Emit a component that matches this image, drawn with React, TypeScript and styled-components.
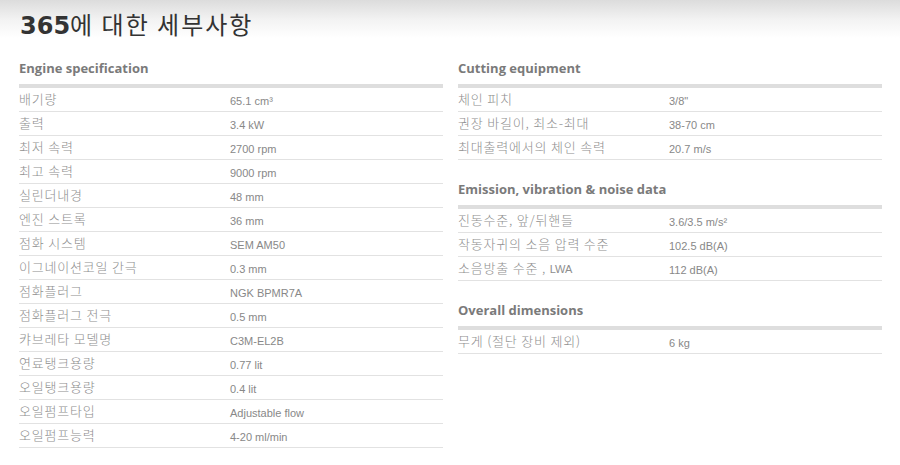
import React from "react";
import styled, { createGlobalStyle } from "styled-components";

const GlobalStyle = createGlobalStyle`
  html, body { margin: 0; padding: 0; background: #ffffff; }
  body { font-family: "Liberation Sans", "Noto Sans CJK KR", sans-serif; }
`;

const Page = styled.div`
  width: 900px;
  height: 465px;
  overflow: hidden;
  background: #ffffff;
`;

const Header = styled.header`
  height: 39px;
  padding-left: 20px;
  display: flex;
  align-items: flex-end;
  background: linear-gradient(to bottom, #dcdcdc 0px, #f3f3f3 20px, #ffffff 38px);
`;

const Title = styled.h1`
  margin: 0;
  font-family: "Noto Sans CJK KR", sans-serif;
  font-weight: 400;
  font-size: 24px;
  line-height: 28px;
  letter-spacing: 2px;
  color: #333333;
  transform: translateY(1px);
`;

const TitleNumber = styled.span`
  font-family: "DejaVu Sans", "Noto Sans CJK KR", sans-serif;
  font-weight: 700;
  letter-spacing: 0px;
`;

const Columns = styled.div`
  display: grid;
  grid-template-columns: 424px 424px;
  column-gap: 15px;
  padding-left: 19px;
  align-items: start;
`;

const Column = styled.div`
  display: flex;
  flex-direction: column;
`;

const Section = styled.section`
  margin-top: 21px;
`;

const SectionTitle = styled.h2`
  margin: 0 0 8px 0;
  font-family: "Open Sans", "Liberation Sans", sans-serif;
  font-weight: 700;
  font-size: 13px;
  line-height: 16px;
  color: #7a7a7a;
`;

const Bar = styled.div`
  height: 4px;
  background: #dedede;
`;

const Row = styled.div`
  display: grid;
  grid-template-columns: 211px 1fr;
  align-items: center;
  height: 23px;
  border-bottom: 1px solid #e2e2e2;
`;

const Label = styled.span`
  font-family: "Noto Sans CJK KR", sans-serif;
  font-weight: 300;
  font-size: 13px;
  letter-spacing: 0.8px;
  color: #8e8e8e;
  white-space: nowrap;
  transform: translateY(-1px);
`;

const Small = styled.span`
  font-family: "Liberation Sans", sans-serif;
  font-size: 11px;
  letter-spacing: 0;
`;

const Value = styled.span`
  font-family: "Liberation Sans", "Noto Sans CJK KR", sans-serif;
  font-size: 11px;
  color: #888888;
  white-space: nowrap;
  transform: translateY(1px);
`;

type Spec = { label: React.ReactNode; value: string };
type Group = { title: string; rows: Spec[] };

const left: Group[] = [
  {
    title: "Engine specification",
    rows: [
      { label: "배기량", value: "65.1 cm³" },
      { label: "출력", value: "3.4 kW" },
      { label: "최저 속력", value: "2700 rpm" },
      { label: "최고 속력", value: "9000 rpm" },
      { label: "실린더내경", value: "48 mm" },
      { label: "엔진 스트록", value: "36 mm" },
      { label: "점화 시스템", value: "SEM AM50" },
      { label: "이그네이션코일 간극", value: "0.3 mm" },
      { label: "점화플러그", value: "NGK BPMR7A" },
      { label: "점화플러그 전극", value: "0.5 mm" },
      { label: "캬브레타 모델명", value: "C3M-EL2B" },
      { label: "연료탱크용량", value: "0.77 lit" },
      { label: "오일탱크용량", value: "0.4 lit" },
      { label: "오일펌프타입", value: "Adjustable flow" },
      { label: "오일펌프능력", value: "4-20 ml/min" },
    ],
  },
];

const right: Group[] = [
  {
    title: "Cutting equipment",
    rows: [
      { label: "체인 피치", value: "3/8\"" },
      { label: "권장 바길이, 최소-최대", value: "38-70 cm" },
      { label: "최대출력에서의 체인 속력", value: "20.7 m/s" },
    ],
  },
  {
    title: "Emission, vibration & noise data",
    rows: [
      { label: "진동수준, 앞/뒤핸들", value: "3.6/3.5 m/s²" },
      { label: "작동자귀의 소음 압력 수준", value: "102.5 dB(A)" },
      {
        label: (
          <>
            소음방출 수준 , <Small>LWA</Small>
          </>
        ),
        value: "112 dB(A)",
      },
    ],
  },
  {
    title: "Overall dimensions",
    rows: [{ label: "무게 (절단 장비 제외)", value: "6 kg" }],
  },
];

const renderGroups = (groups: Group[]) =>
  groups.map((g) => (
    <Section key={g.title}>
      <SectionTitle>{g.title}</SectionTitle>
      <Bar />
      {g.rows.map((r, i) => (
        <Row key={i}>
          <Label>{r.label}</Label>
          <Value>{r.value}</Value>
        </Row>
      ))}
    </Section>
  ));

export default function App() {
  return (
    <Page>
      <GlobalStyle />
      <Header>
        <Title>
          <TitleNumber>365</TitleNumber>에 대한 세부사항
        </Title>
      </Header>
      <Columns>
        <Column>{renderGroups(left)}</Column>
        <Column>{renderGroups(right)}</Column>
      </Columns>
    </Page>
  );
}
